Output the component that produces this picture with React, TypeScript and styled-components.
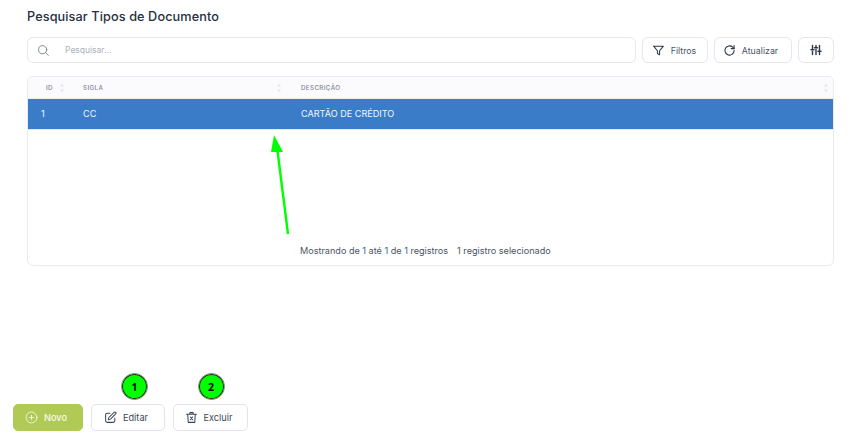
import React from "react";
import styled, { createGlobalStyle } from "styled-components";

const Global = createGlobalStyle`
  html, body { margin: 0; padding: 0; background: #fff; overflow: hidden; }
  body { font-family: Inter, "Noto Sans", "Liberation Sans", sans-serif; color: #2b3646; }
  * { box-sizing: border-box; }
`;
const Page = styled.div`
  position: relative; width: 852px; height: 446px; display: flex; flex-direction: column;
  padding: 8px 18px 15px 13px;
`;
const Main = styled.main`flex: 1; display: flex; flex-direction: column; padding-left: 14px;`;
const Title = styled.h1`margin: 0 0 12px; font-size: 12.7px; line-height: 18px; font-weight: 500; color: #26303f; letter-spacing: 0.1px;`;
const Toolbar = styled.div`display: flex; gap: 6px; height: 26px; margin-bottom: 13px; margin-top: -1px;`;
const Search = styled.div`
  flex: 1; display: flex; align-items: center; gap: 15px; padding-left: 9px;
  border: 1px solid #e4e7ec; border-radius: 6px; background: #fff;
  font-size: 8.5px; color: #aab0ba;
`;
const ToolButton = styled.button<{ $w: number; $shift?: number }>`
  width: ${p => p.$w}px; display: flex; align-items: center; justify-content: center; gap: 6px;
  padding: 0 ${p => p.$shift ?? 0}px 0 0;
  border: 1px solid #e4e7ec; border-radius: 6px; background: #fff;
  font: 400 8.8px Inter, sans-serif; color: #4a5464;
`;
const TableCard = styled.section`
  height: 190px; display: flex; flex-direction: column;
  border: 1px solid #e9ebef; border-radius: 6px; overflow: hidden; background: #fff;
`;
const Columns = "41px 217px 1fr";
const HeadRow = styled.div`
  display: grid; grid-template-columns: ${Columns}; height: 22px; background: #fbfbfd;
  border-bottom: 1px solid #eaecf0;
`;
const HeadCell = styled.div<{ $pad: number }>`
  display: flex; align-items: center; justify-content: space-between; padding: 0 4px 0 ${p => p.$pad}px;
  font-size: 6.2px; font-weight: 500; letter-spacing: 0.4px; color: #7d8592;
`;
const BodyRow = styled.div`
  display: grid; grid-template-columns: ${Columns}; height: 31px; background: #3b7cc9; color: #f3f7fc;
  border-bottom: 1px solid #e3e6eb;
`;
const BodyCell = styled.div<{ $pad: number }>`
  display: flex; align-items: center; padding: 0 0 2px ${p => p.$pad}px; font-size: 9.1px; font-weight: 400;
`;
const Footer = styled.div`
  margin-top: auto; height: 30px; padding: 0 0 0 272px; display: flex; align-items: center; gap: 9px;
  font-size: 9.1px; color: #4a5464; white-space: nowrap;
`;
const Num = styled.span`color: #2c5fa3;`;
const Actions = styled.div`display: flex; gap: 8px; height: 27px;`;
const Action = styled.button<{ $w: number; $primary?: boolean }>`
  position: relative; width: ${p => p.$w}px; display: flex; align-items: center; justify-content: center; gap: 6px; padding: 0 4px 0 0;
  border: 1px solid ${p => (p.$primary ? "#afcb55" : "#e1e4ea")}; border-radius: 5px;
  background: ${p => (p.$primary ? "#afcb55" : "#fff")};
  color: ${p => (p.$primary ? "#f7fbe9" : "#3d4756")};
  font: ${p => (p.$primary ? 500 : 400)} 9.2px Inter, sans-serif;
`;
const Badge = styled.span<{ $dx: number }>`
  position: absolute; top: -32px; left: 50%; margin-left: ${p => p.$dx - 14}px; width: 27px; height: 27px; border-radius: 50%;
  background: #00ff00; border: 1px solid #8a8a8a; box-shadow: inset 0 0 0 1px #222;
  display: flex; align-items: center; justify-content: center;
  font: 700 10.5px "Open Sans", sans-serif; color: #000;
`;
const Arrow = styled.svg`position: absolute; left: 260px; top: 125px; pointer-events: none;`;

const Sort = () => (
  <svg width="6" height="10" viewBox="0 0 6 10" fill="#e3e6ea">
    <path d="M3 0.5 5 3.5H1zM3 9.5 1 6.5H5z" />
  </svg>
);
const Ic = styled.svg.attrs({ fill: "none", stroke: "currentColor", strokeLinecap: "round", strokeLinejoin: "round", viewBox: "0 0 24 24" })<{ $s: number }>`
  width: ${p => p.$s}px; height: ${p => p.$s}px; flex: none;
`;

export default function App() {
  return (
    <Page>
      <Global />
      <Main>
        <Title>Pesquisar Tipos de Documento</Title>
        <Toolbar>
          <Search>
            <Ic $s={13} strokeWidth={1.5} style={{ color: "#6b7280" }}><circle cx="10.5" cy="10.500" r="7.5" /><path d="m21 21-5.2-5.2" /></Ic>
            <span>Pesquisar...</span>
          </Search>
          <ToolButton $w={66} $shift={2}>
            <Ic $s={13} strokeWidth={1.9} style={{ color: "#2b3646" }}><path d="M3 4h18l-7 8.5V20l-4-2.5v-5z" /></Ic>Filtros
          </ToolButton>
          <ToolButton $w={78} $shift={5}>
            <Ic $s={13} strokeWidth={2} style={{ color: "#2b3646" }}><path d="M20.5 12a8.5 8.5 0 1 1-2.6-6.1L20.5 8.5" /><path d="M20.5 3v5.5H15" /></Ic>Atualizar
          </ToolButton>
          <ToolButton $w={36}>
            <Ic $s={12} strokeWidth={2.8} style={{ color: "#2b3646" }}><path d="M5 3v7M5 15v6M12 3v3M12 11v10M19 3v9M19 17v4M2 11.5h6M9 7.5h6M16 14.500h6" /></Ic>
          </ToolButton>
        </Toolbar>
        <TableCard>
          <HeadRow>
            <HeadCell $pad={18}>ID<Sort /></HeadCell>
            <HeadCell $pad={14}>SIGLA<Sort /></HeadCell>
            <HeadCell $pad={15}>DESCRIÇÃO<Sort /></HeadCell>
          </HeadRow>
          <BodyRow>
            <BodyCell $pad={13}>1</BodyCell>
            <BodyCell $pad={14}>CC</BodyCell>
            <BodyCell $pad={15}>CARTÃO DE CRÉDITO</BodyCell>
          </BodyRow>
          <Footer>
            <span>Mostrando de <Num>1</Num> até <Num>1</Num> de <Num>1</Num> registros</span>
            <span>1 registro selecionado</span>
          </Footer>
        </TableCard>
      </Main>
      <Actions>
        <Action $w={70} $primary>
          <Ic $s={13} strokeWidth={1.6}><circle cx="12" cy="12" r="10" /><path d="M12 8v8M8 12h8" /></Ic>Novo
        </Action>
        <Action $w={74}>
          <Badge $dx={7}>1</Badge>
          <Ic $s={13} strokeWidth={1.9}><path d="M11 4H6a3 3 0 0 0-3 3v11a3 3 0 0 0 3 3h11a3 3 0 0 0 3-3v-5" /><path d="M18.500 2.500a2.100 2.100 0 0 1 3 3L12 15l-4 1 1-4z" /></Ic>Editar
        </Action>
        <Action $w={75}>
          <Badge $dx={1}>2</Badge>
          <Ic $s={13} strokeWidth={1.9}><path d="M3 6h18M9 6V3h6v3M5 6l1 15h12l1-15M10 11l4 5M14 11l-4 5" /></Ic>Excluir
        </Action>
      </Actions>
      <Arrow width="40" height="115" viewBox="0 0 40 115">
        <path d="M28 109 17.500 26" stroke="#00ff00" strokeWidth="2.4" />
        <path d="M14 10 23 27 11 27z" fill="#00ff00" />
      </Arrow>
    </Page>
  );
}
